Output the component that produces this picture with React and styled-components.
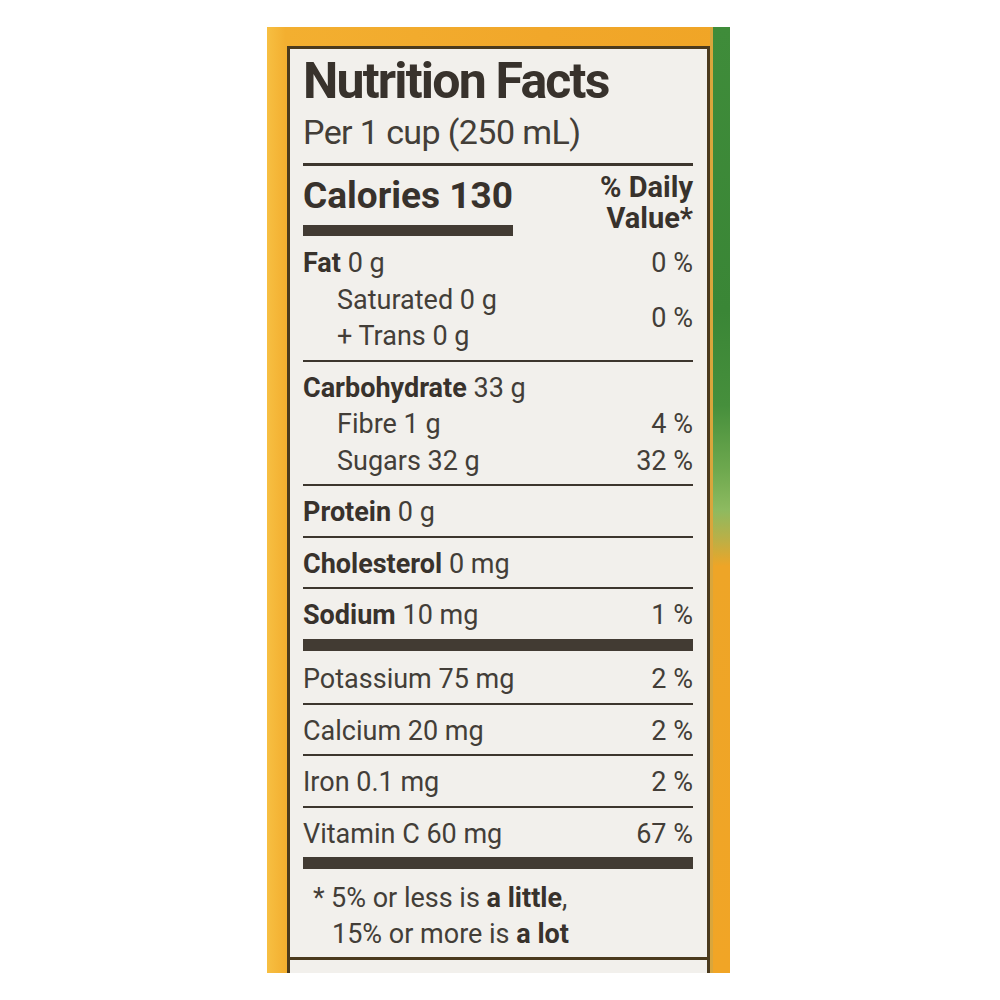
import React from 'react';
import styled, { createGlobalStyle } from 'styled-components';

const GlobalStyle = createGlobalStyle`
    body {
        margin: 0;
        background: #ffffff;
        font-family: Roboto, "Liberation Sans", sans-serif;
    }
`;

const Page = styled.div`
    padding: 27px 0 0 267px;
`;

const Carton = styled.div`
    display: flex;
    width: 463px;
    height: 946px;
    overflow: hidden;
    background: linear-gradient(90deg, #f7bf42 0, #f3af30 4%, #f1a72a 60%, #f0a526 100%);
`;

const LabelArea = styled.div`
    flex: 1;
    padding: 19px 0 0 20px;
`;

const SideStrip = styled.div`
    width: 20px;
    background:
        linear-gradient(90deg, #d9a63c 0, #d9a63c 3px, transparent 3px),
        linear-gradient(180deg, #3f8c3a 0%, #3a8636 30%, #468f3c 40%, #6fa94f 47%, #8dba60 51%, #b8b048 54%, #eea527 57%, #f1a526 100%);
`;

const Label = styled.div`
    background: #f2f0ec;
    border: 3px solid #4b3a1d;
    border-bottom: none;
    color: #433e38;
`;

const Body = styled.div`
    padding: 6px 14px 0 13px;
`;

const Title = styled.h1`
    margin: 0;
    font-size: 50px;
    line-height: 52px;
    font-weight: 700;
    letter-spacing: -1.8px;
    color: #38322c;
`;

const Serving = styled.div`
    margin-top: 5px;
    font-size: 34px;
    line-height: 40px;
    letter-spacing: -0.6px;
`;

const HeadRule = styled.div`
    margin-top: 11px;
    height: 3px;
    background: #3d362e;
`;

const CaloriesRow = styled.div`
    display: flex;
    justify-content: space-between;
    align-items: flex-start;
`;

const CaloriesBlock = styled.div`
    display: flex;
    flex-direction: column;
    padding-top: 10px;
`;

const Calories = styled.div`
    font-size: 37px;
    line-height: 40px;
    font-weight: 700;
    color: #38322c;
`;

const CaloriesBar = styled.div`
    margin-top: 9px;
    height: 11px;
    background: #423b33;
`;

const DailyHead = styled.div`
    padding-top: 6px;
    font-size: 29px;
    line-height: 31px;
    font-weight: 700;
    text-align: right;
    color: #38322c;
`;

const ruleStyles = {
    none: 'none',
    thin: '2px solid #3d362e',
    thick: '12px solid #423b33',
};

const Group = styled.div`
    display: grid;
    grid-template-columns: 1fr auto;
    padding: ${(p) => p.$padTop || 8}px 0 5px;
    border-top: ${(p) => ruleStyles[p.$rule || 'thin']};
    font-size: 27px;
    line-height: 36.5px;
`;

const Name = styled.div`
    padding-left: ${(p) => (p.$sub ? '34px' : '0')};
    white-space: nowrap;
`;

const Strong = styled.b`
    font-weight: 700;
    color: #38322c;
`;

const Percent = styled.div`
    text-align: right;
    white-space: nowrap;
    grid-row: ${(p) => (p.$span ? `span ${p.$span}` : 'auto')};
    align-self: center;
`;

const Footnote = styled.div`
    border-top: 12px solid #423b33;
    padding: 11px 0 5px 29px;
    font-size: 27px;
    line-height: 36px;
    text-indent: -19px;
`;

const Star = styled.span`
    display: inline-block;
    width: 18px;
    text-indent: 0;
`;

const NextPanel = styled.div`
    border-top: 3px solid #4b3a1d;
    height: 40px;
`;

const groups = [
    {
        rule: 'none',
        padTop: 9,
        rows: [
            { name: 'Fat', amount: '0 g', dv: '0 %' },
            { sub: true, amount: 'Saturated 0 g', dv: '0 %', span: 2 },
            { sub: true, amount: '+ Trans 0 g' },
        ],
    },
    {
        rows: [
            { name: 'Carbohydrate', amount: '33 g', dv: '' },
            { sub: true, amount: 'Fibre 1 g', dv: '4 %' },
            { sub: true, amount: 'Sugars 32 g', dv: '32 %' },
        ],
    },
    { rows: [{ name: 'Protein', amount: '0 g', dv: '' }] },
    { rows: [{ name: 'Cholesterol', amount: '0 mg', dv: '' }] },
    { rows: [{ name: 'Sodium', amount: '10 mg', dv: '1 %' }] },
    { rule: 'thick', padTop: 10.5, rows: [{ amount: 'Potassium 75 mg', dv: '2 %' }] },
    { rows: [{ amount: 'Calcium 20 mg', dv: '2 %' }] },
    { rows: [{ amount: 'Iron 0.1 mg', dv: '2 %' }] },
    { rows: [{ amount: 'Vitamin C 60 mg', dv: '67 %' }] },
];

const App = () => {
    return (
        <Page>
            <GlobalStyle />
            <Carton>
                <LabelArea>
                    <Label>
                        <Body>
                            <Title>Nutrition Facts</Title>
                            <Serving>Per 1 cup (250 mL)</Serving>
                            <HeadRule />
                            <CaloriesRow>
                                <CaloriesBlock>
                                    <Calories>Calories 130</Calories>
                                    <CaloriesBar />
                                </CaloriesBlock>
                                <DailyHead>
                                    % Daily
                                    <br />
                                    Value*
                                </DailyHead>
                            </CaloriesRow>
                            {groups.map((group, i) => (
                                <Group key={i} $rule={group.rule} $padTop={group.padTop}>
                                    {group.rows.map((row, j) => (
                                        <React.Fragment key={j}>
                                            <Name $sub={row.sub}>
                                                {row.name && <Strong>{row.name} </Strong>}
                                                {row.amount}
                                            </Name>
                                            {row.dv !== undefined && (
                                                <Percent $span={row.span}>{row.dv}</Percent>
                                            )}
                                        </React.Fragment>
                                    ))}
                                </Group>
                            ))}
                            <Footnote>
                                <Star>*</Star>5% or less is <Strong>a little</Strong>,
                                <br />
                                15% or more is <Strong>a lot</Strong>
                            </Footnote>
                        </Body>
                        <NextPanel />
                    </Label>
                </LabelArea>
                <SideStrip />
            </Carton>
        </Page>
    );
};

export default App;
